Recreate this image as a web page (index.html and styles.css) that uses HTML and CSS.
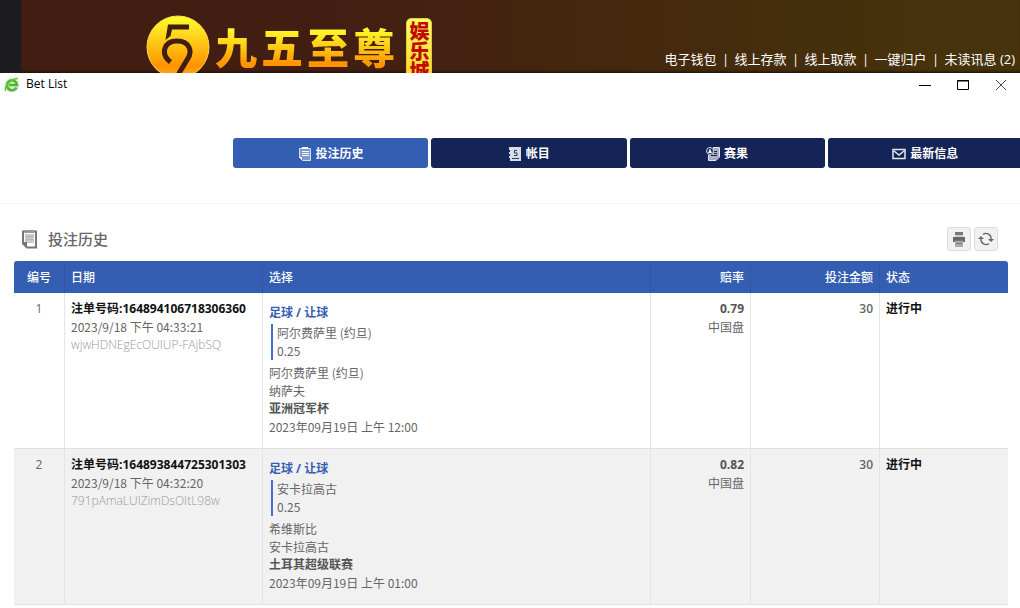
FILE: index.html
```
<!DOCTYPE html>
<html lang="zh-CN">
<head>
<meta charset="utf-8">
<title>Bet List</title>
<link rel="stylesheet" href="styles.css">
</head>
<body>
<header class="site-header">
  <div class="brand">
    <svg class="brand-mark" viewBox="0 0 64 64" aria-hidden="true">
      <defs><linearGradient id="gold" x1="0" y1="0" x2="0" y2="1"><stop offset="0" stop-color="#ffff2e"/><stop offset=".45" stop-color="#ffc414"/><stop offset=".8" stop-color="#ff9400"/><stop offset="1" stop-color="#ffa820"/></linearGradient></defs>
      <circle cx="32" cy="32" r="31" fill="url(#gold)" stroke="#ffd84a"/>
      <path d="M22 9.500H43V14.500H26L24.500 21L19.500 25Z" fill="#421e12"/>
      <path d="M24.500 47C14 39 18 26 31 26C44 26 47 37 41 45L32 60" fill="none" stroke="#421e12" stroke-width="5"/>
    </svg>
    <div class="brand-name"><span>九</span><span>五</span><span>至</span><span>尊</span></div>
    <div class="brand-badge">娱乐城</div>
  </div>
  <nav class="account-links">
    <a href="#">电子钱包</a><i>|</i><a href="#">线上存款</a><i>|</i><a href="#">线上取款</a><i>|</i><a href="#">一键归户</a><i>|</i><a href="#">未读讯息 (2)</a>
  </nav>
</header>

<section class="window">
  <div class="title-bar">
    <svg class="browser-icon" viewBox="0 0 16 16" aria-hidden="true"><circle cx="8" cy="8" r="7.500" fill="#e4e7e8"/><path d="M12.500 10.500A5 5 0 1 1 13 8H5" fill="none" stroke="#4dbb22" stroke-width="2.600"/><path d="M2 14C-1 10 8 1 14 1.500" fill="none" stroke="#62c92f" stroke-width="1.500"/></svg>
    <h1>Bet List</h1>
    <div class="window-controls">
      <button type="button" aria-label="Minimize"><svg viewBox="0 0 14 14"><path d="M1 7.500H13" stroke="#000"/></svg></button>
      <button type="button" aria-label="Maximize"><svg viewBox="0 0 14 14"><path d="M1.500 2.500H12.500V11.500H1.500ZM1 3H13" fill="none" stroke="#000"/></svg></button>
      <button type="button" aria-label="Close"><svg viewBox="0 0 14 14"><path d="M2 2L12 12M12 2L2 12" stroke="#444"/></svg></button>
    </div>
  </div>

  <nav class="tabs">
    <button type="button" class="tab active"><svg viewBox="0 0 14 14"><path d="M1.500 1.500H12.500V13.500H4.500L1.500 10.500Z" fill="#7d99d0" stroke="#d8e1f2"/><path d="M4 0H10V2H4Z" fill="#fff"/><path d="M4 4.500H11M4 6.500H11M4 8.500H11" stroke="#fff"/><path d="M1 10H4V13Z" fill="#fff"/></svg>投注历史</button>
    <button type="button" class="tab"><svg viewBox="0 0 14 14"><path d="M1 0H13V14H2V11H1V9H2V7H1V5H2V3H1Z" fill="#d9dce5"/><path d="M9 3.500H6.500V6H9V8.500H6M4 11.500H11" fill="none" stroke="#2d3961"/></svg>帐目</button>
    <button type="button" class="tab"><svg viewBox="0 0 14 14"><path d="M7 1H13V10L10 13H3V8H6Z" fill="#aab0c5"/><circle cx="4" cy="4" r="3.500" fill="#152457" stroke="#d9dce5"/><path d="M4 1.500L6 6H2Z" fill="#fff"/><path d="M8 4.500H11M8 6.500H11M5 8.500H11" fill="none" stroke="#152457"/><path d="M2.500 8V13.500H10L13.500 10V.500H7" fill="none" stroke="#e5e8ef"/></svg>赛果</button>
    <button type="button" class="tab"><svg viewBox="0 0 14 14"><path d="M1 2.500H13V11.500H1ZM2 4L7 8L12 4" fill="none" stroke="#e5e8ef" stroke-width="1.500"/></svg>最新信息</button>
  </nav>

  <main class="report">
    <div class="report-head">
      <svg class="report-icon" viewBox="0 0 18 20" aria-hidden="true"><path d="M2 2.500H15V18.500H6L2 14.500Z" fill="#fff" stroke="#777" stroke-width="2"/><path d="M4 5H13V14H4Z" fill="#c9c9c9"/><path d="M4 1H13V4H4Z" fill="#999"/><path d="M5 7.500H12M5 10.500H12" stroke="#b3b3b3"/><path d="M1 13H6V19Z" fill="#777"/></svg>
      <h2>投注历史</h2>
      <div class="tools">
        <button type="button" aria-label="打印"><svg viewBox="0 0 16 16"><path d="M4 1H12V4H4Z" fill="#777"/><path d="M2 6H14V11H2Z" fill="#686868"/><path d="M4 5H12" stroke="#aaa"/><path d="M4 9H12V16H4Z" fill="#aaa"/><path d="M3 9.500H13M5 12.500H11" stroke="#777"/></svg></button>
        <button type="button" aria-label="刷新"><svg viewBox="0 0 16 16"><path d="M5 3.500A5 5 0 0 1 13 8M11 12.500A5 5 0 0 1 3 8" fill="none" stroke="#666" stroke-width="1.300"/><path d="M10 8H16L13 11ZM0 8H6L3 5Z" fill="#666"/></svg></button>
      </div>
    </div>

    <table class="bets">
      <colgroup><col class="c-no"><col class="c-date"><col><col class="c-odds"><col class="c-stake"><col class="c-status"></colgroup>
      <thead><tr><th class="center">编号</th><th>日期</th><th>选择</th><th class="right">赔率</th><th class="right">投注金额</th><th>状态</th></tr></thead>
      <tbody>
        <tr>
          <td class="center">1</td>
          <td><strong class="dark">注单号码:164894106718306360</strong><p>2023/9/18 下午 04:33:21</p><p class="faint">wjwHDNEgEcOUIUP-FAjbSQ</p></td>
          <td class="selection"><strong class="market">足球 / 让球</strong><div class="pick"><p>阿尔费萨里 (约旦)</p><p>0.25</p></div><p>阿尔费萨里 (约旦)</p><p>纳萨夫</p><strong>亚洲冠军杯</strong><p>2023年09月19日 上午 12:00</p></td>
          <td class="right"><strong>0.79</strong><p>中国盘</p></td>
          <td class="right stake">30</td>
          <td><strong class="dark">进行中</strong></td>
        </tr>
        <tr>
          <td class="center">2</td>
          <td><strong class="dark">注单号码:164893844725301303</strong><p>2023/9/18 下午 04:32:20</p><p class="faint">791pAmaLUIZimDsOItL98w</p></td>
          <td class="selection"><strong class="market">足球 / 让球</strong><div class="pick"><p>安卡拉高古</p><p>0.25</p></div><p>希维斯比</p><p>安卡拉高古</p><strong>土耳其超级联赛</strong><p>2023年09月19日 上午 01:00</p></td>
          <td class="right"><strong>0.82</strong><p>中国盘</p></td>
          <td class="right stake">30</td>
          <td><strong class="dark">进行中</strong></td>
        </tr>
      </tbody>
    </table>
  </main>
</section>
</body>
</html>
```
FILE: styles.css
```
* { box-sizing: border-box; }
body {
  margin: 0;
  overflow-x: hidden;
  background: #fff;
  color: #666;
  font: 12px/18px "Open Sans", "Noto Sans CJK SC", sans-serif;
}
h1, h2, p { margin: 0; font-weight: 400; }
button { padding: 0; border: 0; background: none; font: inherit; color: inherit; }
svg { display: block; flex: none; }

.site-header {
  display: flex;
  justify-content: space-between;
  height: 73px;
  overflow: hidden;
  border-left: 21px solid #1c1c1e;
  background: linear-gradient(90deg, #421e12 30%, #46320b 90%);
  box-shadow: inset 0 -3px 3px -2px #1a0c06;
}
.brand { display: flex; align-items: flex-start; padding: 15px 0 0 125px; }
.brand-mark { width: 64px; height: 64px; }
.brand-name {
  display: flex;
  gap: 4px;
  margin-left: 5px;
  font: 900 42px/62px "Noto Sans CJK SC", sans-serif;
  background: linear-gradient(#ffff2e 20%, #ffc914 52%, #ff9400 78%);
  -webkit-background-clip: text;
  background-clip: text;
  color: transparent;
}
.brand-badge {
  margin: 3px 0 0 11px;
  padding: 2px 0 4px;
  border: 1px solid #e5cb36;
  border-radius: 5px;
  background: linear-gradient(#ffff66, #ffd21c);
  color: #c20a00;
  font: 900 20px/24px "Noto Sans CJK SC", sans-serif;
  white-space: nowrap;
  writing-mode: vertical-rl;
}
.account-links {
  display: flex;
  align-items: flex-end;
  padding: 0 5px 5px 0;
  color: #fff;
  font-size: 13px;
  white-space: nowrap;
}
.account-links a { color: inherit; text-decoration: none; }
.account-links i { width: 18px; text-align: center; font-style: normal; }

.title-bar { display: flex; align-items: center; height: 24px; padding: 0 12px 0 4px; }
.browser-icon { width: 16px; height: 16px; }
.title-bar h1 { margin: 0 auto 2px 6px; color: #000; font-size: 12px; }
.window-controls { display: flex; gap: 24px; }
.window-controls svg { width: 14px; height: 14px; }

.tabs {
  display: flex;
  gap: 3px;
  height: 106px;
  margin: 0 -3px 0 233px;
  padding-top: 41px;
}
.tab {
  display: flex;
  flex: 1;
  align-items: center;
  justify-content: center;
  gap: 4px;
  height: 30px;
  padding-top: 2px;
  border-radius: 3px;
  background: #152457;
  color: #fff;
  font-weight: 700;
}
.tab.active { background: #345eb1; }
.tab svg { width: 14px; height: 14px; }

.report { padding: 23px 12px 3px 14px; border-top: 1px solid #f6f6f6; }
.report-head { display: flex; align-items: center; height: 24px; margin-bottom: 10px; padding: 0 10px 0 7px; }
.report-icon { width: 18px; height: 20px; }
.report-head h2 { margin: 0 auto 0 9px; font-size: 15px; font-weight: 500; }
.tools { display: flex; gap: 3px; }
.tools button {
  display: grid;
  place-items: center;
  width: 24px;
  height: 24px;
  border: 1px solid #ddd;
  border-radius: 3px;
  background: #f1f1f1;
}
.tools svg { width: 16px; height: 16px; }

.bets { width: 100%; table-layout: fixed; border-spacing: 0; }
.c-no { width: 51px; }
.c-date { width: 198px; }
.c-odds { width: 100px; }
.c-stake { width: 129px; }
.c-status { width: 128px; }
.bets th {
  height: 32px;
  padding: 2px 6px 0;
  border-right: 1px solid #3057a5;
  background: #345eb1;
  color: #fff;
  font-weight: 500;
  text-align: left;
}
.bets th:first-child { border-top-left-radius: 3px; }
.bets th:last-child { border-top-right-radius: 3px; border-right: 0; }
.bets td {
  padding: 7px 6px 12px;
  border-right: 1px solid #e4e4e4;
  border-bottom: 1px solid #e0e0e0;
  vertical-align: top;
}
.bets td:last-child { border-right: 0; }
.bets tbody tr:nth-child(even) { background: #f1f1f1; }
.bets .center { text-align: center; }
.bets .right { text-align: right; }
.bets p { font-family: "Noto Sans CJK SC", sans-serif; }
.bets strong { display: block; color: #555; }
.bets .dark { color: #111; }
.bets .faint { color: #999; font-family: "Open Sans", sans-serif; font-weight: 300; }
.bets .selection { padding-top: 11px; }
.bets .market { color: #345eb1; }
.bets .stake { font-weight: 600; }
.pick { margin: 2px 0 4px 2px; padding-left: 4px; border-left: 2px solid #4470cc; }
```
